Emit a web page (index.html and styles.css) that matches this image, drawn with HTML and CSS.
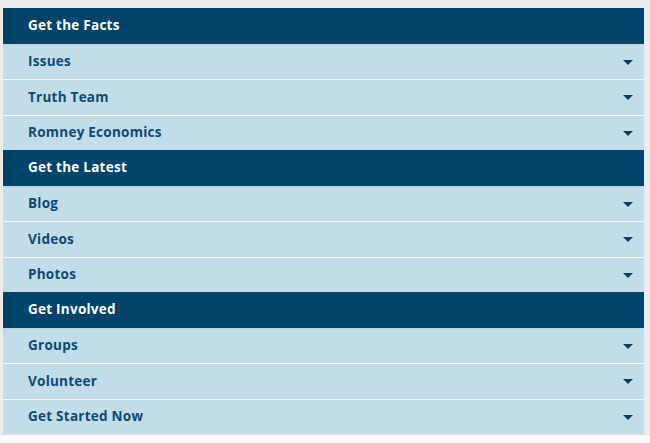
FILE: index.html
```html
<!DOCTYPE html>
<html>
<head>
<meta charset="utf-8">
<link rel="stylesheet" href="styles.css">
</head>
<body>
<div class="page">
<nav class="menu">
  <div class="head">Get the Facts</div>
  <div class="item"><span>Issues</span><i class="caret"></i></div>
  <div class="item"><span>Truth Team</span><i class="caret"></i></div>
  <div class="item"><span>Romney Economics</span><i class="caret"></i></div>
  <div class="head">Get the Latest</div>
  <div class="item"><span>Blog</span><i class="caret"></i></div>
  <div class="item"><span>Videos</span><i class="caret"></i></div>
  <div class="item"><span>Photos</span><i class="caret"></i></div>
  <div class="head">Get Involved</div>
  <div class="item"><span>Groups</span><i class="caret"></i></div>
  <div class="item"><span>Volunteer</span><i class="caret"></i></div>
  <div class="item"><span>Get Started Now</span><i class="caret"></i></div>
</nav>
</div>
</body>
</html>
```
FILE: styles.css
```css
html, body {
  margin: 0;
  padding: 0;
}
body {
  background: #fafafa;
  font-family: "Open Sans", "Liberation Sans", sans-serif;
}
.page {
  background: #ececec;
  padding: 8px 6px 0 3px;
  border-bottom: 1.5px solid #dedede;
}
.menu {
  display: flex;
  flex-direction: column;
  width: 641px;
}
.head, .item {
  height: 35.5px;
  box-sizing: border-box;
  display: flex;
  align-items: center;
  padding: 0 11px 1.5px 25px;
  font-size: 13.5px;
  font-weight: 700;
  letter-spacing: 0.25px;
}
.head {
  background: #00446c;
  color: #ffffff;
}
.item {
  background: #c3dcea;
  color: #0d4a73;
  justify-content: space-between;
  border-top: 1.5px solid #f4f8fb;
}
.head + .item {
  border-top: 1px solid #b9d3e2;
}
.caret {
  width: 0;
  height: 0;
  border-left: 5px solid transparent;
  border-right: 5px solid transparent;
  border-top: 5px solid #0e3f60;
  margin-top: 2px;
}
```
